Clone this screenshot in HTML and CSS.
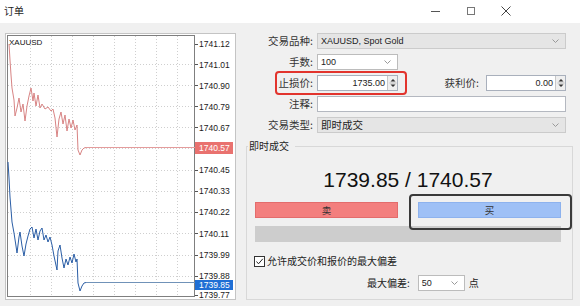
FILE: index.html
```html
<!DOCTYPE html>
<html lang="zh">
<head>
<meta charset="utf-8">
<title>订单</title>
<link rel="stylesheet" href="styles.css">
</head>
<body>
<div class="win">
  <header class="titlebar">
    <span class="title">订单</span>
    <div class="wctl">
      <svg class="wbtn" width="12" height="12" viewBox="0 0 12 12"><path d="M1 6.5H10" stroke="#555" stroke-width="1"/></svg>
      <svg class="wbtn" width="12" height="12" viewBox="0 0 12 12"><rect x="2.5" y="2.5" width="7" height="7" fill="none" stroke="#777"/></svg>
      <svg class="wbtn" width="12" height="12" viewBox="0 0 12 12"><path d="M1.5 1.5L10.5 10.5M10.5 1.5L1.5 10.5" stroke="#444" stroke-width="1"/></svg>
    </div>
  </header>
  <div class="main">
    <div class="chart-pane">
      <svg class="chart" width="231" height="267" viewBox="5 33 231 267">
        <rect x="5.5" y="33.5" width="230" height="266" fill="#fff" stroke="#c4c4c4"/>
        <rect x="7.5" y="35.5" width="187" height="261" fill="#fff" stroke="#7f7f7f"/>
        <g class="grid">
          <path d="M30.5 36V296M51.5 36V296M72.5 36V296M93.5 36V296M114.5 36V296M135.5 36V296M156.5 36V296M177.5 36V296"/>
          <path d="M8 64.5H194M8 85.5H194M8 106.5H194M8 127.5H194M8 148.5H194M8 170.5H194M8 191.5H194M8 212.5H194M8 233.5H194M8 255.5H194M8 276.5H194"/>
        </g>
        <path class="ticks" d="M195 44.5H198M195 64.5H198M195 85.5H198M195 106.5H198M195 127.5H198M195 170.5H198M195 191.5H198M195 212.5H198M195 233.5H198M195 255.5H198M195 276.5H198M195 295.5H198"/>
        <text class="sym" x="9" y="45">XAUUSD</text>
        <path class="ask-line" d="M86 147.5H195"/>
        <path class="bid-line" d="M86 282.5H195"/>
        <path class="ask" d="M9 44L10 60L11 75L12 88L14 100L15 116L17 108L19 98L21 112L23 104L25 121L27 106L29 96L31 88L33 101L34 93L36 106L38 95L40 108L42 104L45 109L48 107L51 111L53 109L55 118L57 137L59 119L61 112L63 124L65 115L67 131L69 119L71 128L73 120L75 130L77 125L78 150L80 155L82 150L84 148L86 147.5"/>
        <path class="bid" d="M8 162L9 178L10 197L12 222L14 233L16 246L17 253L19 237L20 232L22 246L24 256L26 244L28 236L30 229L32 227L34 238L36 229L38 240L40 231L42 228L44 240L46 235L48 242L50 237L52 245L54 256L57 270L58 251L60 245L62 258L64 268L66 259L68 265L70 257L72 263L74 254L76 262L77 259L78 283L80 291L82 286L84 283L86 282.5"/>
        <g class="axis">
          <text x="199" y="47">1741.12</text>
          <text x="199" y="68">1741.01</text>
          <text x="199" y="89">1740.90</text>
          <text x="199" y="110">1740.79</text>
          <text x="199" y="131">1740.67</text>
          <text x="199" y="173">1740.45</text>
          <text x="199" y="194">1740.33</text>
          <text x="199" y="215">1740.22</text>
          <text x="199" y="237">1740.11</text>
          <text x="199" y="258">1739.99</text>
          <text x="199" y="279">1739.88</text>
          <text x="199" y="298">1739.77</text>
        </g>
        <rect x="195" y="142" width="38" height="12" fill="#e9726f"/>
        <text class="tag" x="199" y="151">1740.57</text>
        <rect x="195" y="280" width="38" height="10" fill="#1f6fd5"/>
        <text class="tag" x="199" y="288">1739.85</text>
      </svg>
    </div>
    <div class="form-pane">
      <div class="form">
        <span class="lbl">交易品种:</span>
        <div class="select gray"><span class="val">XAUUSD, Spot Gold</span><svg class="chev" width="7" height="4" viewBox="0 0 7 4"><path d="M0.5 0.5L3.5 3.5L6.5 0.5" fill="none" stroke="#999"/></svg></div>

        <span class="lbl">手数:</span>
        <div class="ctl-row"><div class="select white w81"><span class="val">100</span><svg class="chev" width="7" height="4" viewBox="0 0 7 4"><path d="M0.5 0.5L3.5 3.5L6.5 0.5" fill="none" stroke="#999"/></svg></div></div>

        <span class="lbl">止损价:</span>
        <div class="ctl-row">
          <div class="spin-input w81"><span class="num">1735.00</span><span class="spin"><svg width="8" height="12" viewBox="0 0 8 12"><path d="M4 2L6.5 4.5H1.5Z" fill="#333"/><path d="M0.5 6H7.5" stroke="#bbb"/><path d="M4 10L6.5 7.5H1.5Z" fill="#333"/></svg></span></div>
          <span class="lbl2">获利价:</span>
          <div class="spin-input w80"><span class="num">0.00</span><span class="spin"><svg width="8" height="12" viewBox="0 0 8 12"><path d="M4 2L6.5 4.5H1.5Z" fill="#333"/><path d="M0.5 6H7.5" stroke="#bbb"/><path d="M4 10L6.5 7.5H1.5Z" fill="#333"/></svg></span></div>
        </div>

        <span class="lbl">注释:</span>
        <div class="input"></div>

        <span class="lbl">交易类型:</span>
        <div class="select gray"><span class="val cjk">即时成交</span><svg class="chev" width="7" height="4" viewBox="0 0 7 4"><path d="M0.5 0.5L3.5 3.5L6.5 0.5" fill="none" stroke="#999"/></svg></div>
      </div>

      <fieldset class="group">
        <legend>即时成交</legend>
        <div class="price">1739.85 / 1740.57</div>
        <div class="btns">
          <div class="btn sell">卖</div>
          <div class="btn buy">买</div>
        </div>
        <div class="bar"></div>
        <div class="chk-row">
          <span class="chk"><svg width="9" height="9" viewBox="0 0 9 9"><path d="M1.5 4.5L3.5 6.8L7.8 1.8" fill="none" stroke="#222" stroke-width="1"/></svg></span>
          <span class="chk-lbl">允许成交价和报价的最大偏差</span>
        </div>
        <div class="dev-row">
          <span class="dev-lbl">最大偏差:</span>
          <div class="select white w47"><span class="val">50</span><svg class="chev" width="7" height="4" viewBox="0 0 7 4"><path d="M0.5 0.5L3.5 3.5L6.5 0.5" fill="none" stroke="#999"/></svg></div>
          <span class="pt">点</span>
        </div>
      </fieldset>
    </div>
  </div>
  <div class="hl hl-red"></div>
  <div class="hl hl-dark"></div>
</div>
</body>
</html>
```
FILE: styles.css
```css
* { box-sizing: border-box; }
html, body { margin: 0; padding: 0; }
body {
  width: 580px;
  height: 306px;
  overflow: hidden;
  background: #f0f0f0;
  font-family: "Liberation Sans", "Noto Sans CJK SC", sans-serif;
  color: #222;
}
.win {
  position: relative;
  width: 580px;
  height: 306px;
  background: #f0f0f0;
}
.titlebar {
  height: 23px;
  background: #fff;
  display: flex;
  align-items: center;
  justify-content: space-between;
  padding: 0 0 0 4px;
}
.title {
  font-family: "Noto Sans CJK SC", sans-serif;
  font-size: 10px;
  color: #222;
  line-height: 14px;
  margin-top: -1px;
}
.wctl {
  display: flex;
  align-items: center;
  gap: 23px;
  margin-right: 68px;
  margin-top: -2px;
}
.wbtn { display: block; }

.main {
  display: flex;
  align-items: flex-start;
}
.chart-pane {
  margin: 10px 0 0 5px;
  width: 231px;
  height: 267px;
}
.chart { display: block; }
.chart .grid path { stroke: #cfcfcf; stroke-width: 1; stroke-dasharray: 1 2; fill: none; }
.chart .ticks { stroke: #555; stroke-width: 1; fill: none; }
.chart text {
  font-family: "Liberation Sans", sans-serif;
  font-size: 8.5px;
  fill: #1a1a1a;
}
.chart .sym { font-size: 8px; fill: #111; }
.chart .tag { fill: #fff; }
.chart .ask { stroke: #d88484; stroke-width: 1; fill: none; }
.chart .bid { stroke: #2b5ea6; stroke-width: 1; fill: none; }
.chart .ask-line { stroke: #e49c9c; stroke-width: 1; fill: none; }
.chart .bid-line { stroke: #7092b8; stroke-width: 1; fill: none; }

.form-pane {
  margin-left: 10px;
  width: 327px;
  padding-top: 10px;
}
.form {
  display: grid;
  grid-template-columns: 67px 249px;
  grid-auto-rows: 16px;
  column-gap: 4px;
  row-gap: 5px;
}
.lbl {
  font-family: "Noto Sans CJK SC", sans-serif;
  font-size: 10.5px;
  line-height: 16px;
  text-align: right;
  color: #333;
  white-space: nowrap;
}
.ctl-row {
  display: flex;
  align-items: center;
}
.select {
  height: 16px;
  display: flex;
  align-items: center;
  justify-content: space-between;
  padding: 0 6px 0 3px;
  border: 1px solid #c6c6c6;
  font-size: 9px;
  color: #222;
}
.select.gray { background: #e5e5e5; border-color: #cbcbcb; }
.select.white { background: #fff; border-color: #bcbcbc; }
.select .val { line-height: 14px; }
.select .val.cjk {
  font-family: "Noto Sans CJK SC", sans-serif;
  font-size: 10.5px;
}
.chev { display: block; }
.w81 { width: 81px; }
.w80 { width: 80px; }
.w47 { width: 47px; }
.spin-input {
  height: 16px;
  display: flex;
  background: #fff;
  border: 1px solid #a9b0bc;
}
.spin-input .num {
  flex: 1;
  text-align: right;
  font-size: 9px;
  line-height: 14px;
  padding-right: 2px;
  color: #222;
}
.spin {
  width: 10px;
  display: flex;
  align-items: center;
  justify-content: center;
  background: #efefef;
  border-left: 1px solid #c8c8c8;
}
.spin svg { display: block; }
.lbl2 {
  margin-left: auto;
  margin-right: 7px;
  font-family: "Noto Sans CJK SC", sans-serif;
  font-size: 10.5px;
  line-height: 16px;
  color: #333;
}
.input {
  height: 16px;
  background: #fff;
  border: 1px solid #b4b8c0;
}

.group {
  margin: 6px 0 0 0;
  padding: 0 11px 8px 8px;
  border: 1px solid #d8d8d8;
  min-width: 0;
}
.group legend {
  font-family: "Noto Sans CJK SC", sans-serif;
  font-size: 10px;
  line-height: 14px;
  color: #222;
  padding: 0 6px 0 1px;
  margin-left: -7px;
}
.price {
  margin-top: 15px;
  height: 24px;
  line-height: 24px;
  font-size: 21px;
  text-align: center;
  color: #111;
}
.btns {
  margin-top: 10px;
  display: grid;
  grid-template-columns: 1fr 1fr;
  column-gap: 20px;
}
.btn {
  height: 16px;
  line-height: 14px;
  text-align: center;
  font-family: "Noto Sans CJK SC", sans-serif;
  font-size: 9.5px;
  color: #333;
  border: 1px solid transparent;
}
.btn.sell { background: #f37f7e; border-color: #e36c6c; }
.btn.buy { background: #9ec0f6; border-color: #8db2ee; }
.bar {
  margin-top: 8px;
  height: 16px;
  background: #cdcdcd;
}
.chk-row {
  margin-top: 13px;
  height: 12px;
  display: flex;
  align-items: center;
  gap: 2px;
}
.chk {
  width: 11px;
  height: 11px;
  margin-left: -1px;
  background: #fff;
  border: 1px solid #333;
  display: flex;
  align-items: center;
  justify-content: center;
}
.chk svg { display: block; }
.chk-lbl {
  font-family: "Noto Sans CJK SC", sans-serif;
  font-size: 10px;
  line-height: 12px;
  color: #222;
}
.dev-row {
  margin-top: 8px;
  height: 16px;
  display: flex;
  align-items: center;
  padding-left: 112px;
}
.dev-lbl {
  font-family: "Noto Sans CJK SC", sans-serif;
  font-size: 10px;
  line-height: 16px;
  color: #222;
  margin-right: 8px;
}
.pt {
  font-family: "Noto Sans CJK SC", sans-serif;
  font-size: 10px;
  line-height: 16px;
  color: #222;
  margin-left: 4px;
}

.hl {
  position: absolute;
  border-radius: 4px;
  pointer-events: none;
}
.hl-red {
  left: 275px;
  top: 71px;
  width: 132px;
  height: 24px;
  border: 2px solid #e2342d;
}
.hl-dark {
  left: 409px;
  top: 194px;
  width: 163px;
  height: 36px;
  border: 2px solid #3a3a3a;
}
```
